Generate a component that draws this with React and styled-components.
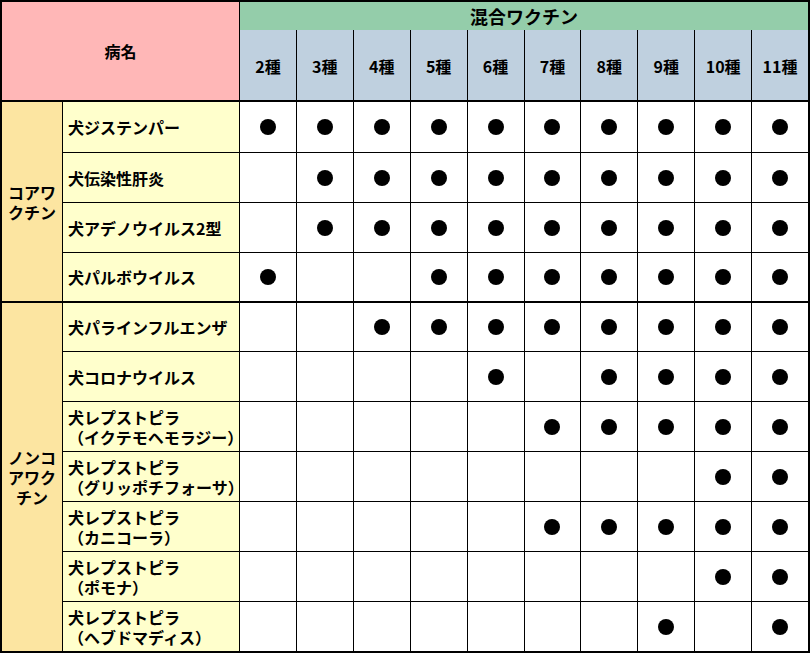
import React from 'react';
import styled, { createGlobalStyle } from 'styled-components';

const GlobalStyle = createGlobalStyle`
    body {
        margin: 0;
        background: #ffffff;
        font-family: 'Noto Sans CJK JP', 'Noto Sans', sans-serif;
    }
`;

const Sheet = styled.div`
    width: 810px;
    box-sizing: border-box;
    padding: 2px;
    background: #000;
    display: flex;
    flex-direction: column;
    gap: 2px;
    color: #000;
    font-weight: 700;
    font-size: 16px;
`;

const Section = styled.div`
    display: grid;
    grid-template-columns: 60px 176px repeat(10, 1fr);
    grid-template-rows: ${(props) => props.rows};
    column-gap: 1px;
    row-gap: ${(props) => (props.tight ? '0' : '1px')};
`;

const Cell = styled.div`
    background: ${(props) => props.bg || '#fff'};
    display: flex;
    align-items: center;
    justify-content: center;
    line-height: 20px;
`;

const TitleCell = styled(Cell)`
    grid-column: 1 / 3;
    grid-row: 1 / 3;
    background: #ffb7b7;
`;

const MixCell = styled(Cell)`
    grid-column: 3 / 13;
    background: #94cdaa;
    font-size: 18px;
`;

const KindCell = styled(Cell)`
    background: #bfd0df;
    padding-top: 2px;
`;

const GroupCell = styled(Cell)`
    grid-column: 1;
    grid-row: ${(props) => `1 / span ${props.span}`};
    background: #fce5a1;
    text-align: center;
`;

const NameCell = styled(Cell)`
    grid-column: 2;
    justify-content: flex-start;
    padding-left: 5px;
    background: #ffffcc;
`;

const Dot = styled.span`
    width: 16px;
    height: 16px;
    border-radius: 50%;
    background: #000;
`;

const kinds = [2, 3, 4, 5, 6, 7, 8, 9, 10, 11];

const core = [
    { name: ['犬ジステンパー'], on: [2, 3, 4, 5, 6, 7, 8, 9, 10, 11] },
    { name: ['犬伝染性肝炎'], on: [3, 4, 5, 6, 7, 8, 9, 10, 11] },
    { name: ['犬アデノウイルス2型'], on: [3, 4, 5, 6, 7, 8, 9, 10, 11] },
    { name: ['犬パルボウイルス'], on: [2, 5, 6, 7, 8, 9, 10, 11] },
];

const nonCore = [
    { name: ['犬パラインフルエンザ'], on: [4, 5, 6, 7, 8, 9, 10, 11] },
    { name: ['犬コロナウイルス'], on: [6, 8, 9, 10, 11] },
    { name: ['犬レプストピラ', '（イクテモヘモラジー）'], on: [7, 8, 9, 10, 11] },
    { name: ['犬レプストピラ', '（グリッポチフォーサ）'], on: [10, 11] },
    { name: ['犬レプストピラ', '（カニコーラ）'], on: [7, 8, 9, 10, 11] },
    { name: ['犬レプストピラ', '（ポモナ）'], on: [10, 11] },
    { name: ['犬レプストピラ', '（ヘブドマディス）'], on: [9, 11] },
];

function Group({ label, items, rows }) {
    return (
        <Section rows={rows}>
            <GroupCell span={items.length}>
                <div>
                    {label.map((l) => (
                        <div key={l}>{l}</div>
                    ))}
                </div>
            </GroupCell>
            {items.map((item, i) => (
                <React.Fragment key={i}>
                    <NameCell>
                        <div>
                            {item.name.map((n) => (
                                <div key={n}>{n}</div>
                            ))}
                        </div>
                    </NameCell>
                    {kinds.map((k) => (
                        <Cell key={k}>{item.on.includes(k) && <Dot />}</Cell>
                    ))}
                </React.Fragment>
            ))}
        </Section>
    );
}

function App() {
    return (
        <>
            <GlobalStyle />
            <Sheet>
                <Section rows='28px 70px' tight>
                    <TitleCell>病名</TitleCell>
                    <MixCell>混合ワクチン</MixCell>
                    {kinds.map((k) => (
                        <KindCell key={k}>{k}種</KindCell>
                    ))}
                </Section>
                <Group label={['コアワ', 'クチン']} items={core} rows='50px 49px 49px 48px' />
                <Group
                    label={['ノンコ', 'アワク', 'チン']}
                    items={nonCore}
                    rows='48px repeat(6, 49px)'
                />
            </Sheet>
        </>
    );
}

export default App;
